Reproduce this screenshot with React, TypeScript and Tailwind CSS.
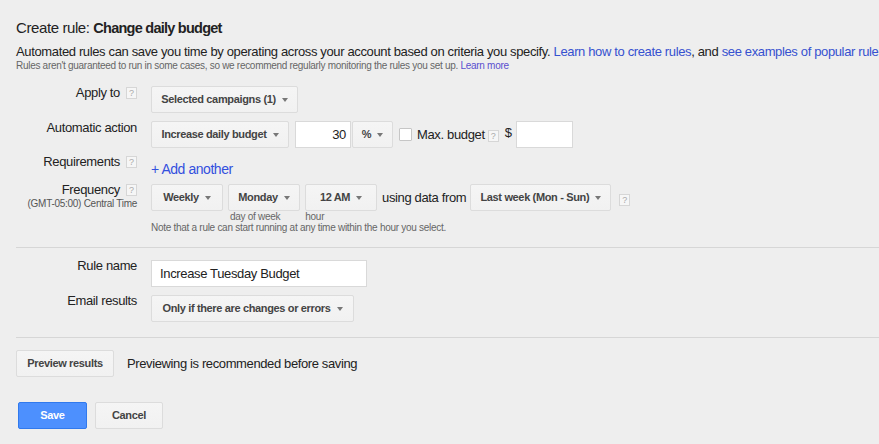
import React from "react";

function Arrow() {
  return (
    <span className="ml-[6px] inline-block h-0 w-0 border-x-[3.5px] border-t-[4px] border-x-transparent border-t-[#777]" />
  );
}

function Help() {
  return (
    <span className="ml-[6px] inline-flex h-[12px] w-[11px] items-center justify-center border border-[#d6d6d6] bg-[#f6f6f6] text-[9px] leading-none tracking-normal text-[#aaa]">
      ?
    </span>
  );
}

function DropButton({ label, width }: { label: string; width: string }) {
  return (
    <div
      className={`flex h-[27px] ${width} shrink-0 items-center justify-center rounded-[2px] border border-[#dcdcdc] bg-gradient-to-b from-[#f5f5f5] to-[#f1f1f1] text-[11px] font-bold tracking-[-0.35px] text-[#444]`}
    >
      <span>{label}</span>
      <Arrow />
    </div>
  );
}

function Label({ text, help, sub }: { text: string; help?: boolean; sub?: string }) {
  return (
    <div className="-mt-px w-[137px] shrink-0 text-right">
      <div className="flex items-center justify-end text-[13px] leading-[16px] tracking-[-0.35px] text-[#222]">
        <span>{text}</span>
        {help && <Help />}
      </div>
      {sub && <div className="text-[10px] leading-[12px] tracking-[-0.28px] text-[#555]">{sub}</div>}
    </div>
  );
}

export default function App() {
  return (
    <div className="h-[444px] w-[879px] overflow-hidden bg-[#eeeeee] font-['Liberation_Sans',Arial,sans-serif] text-[#222]">
      <div className="whitespace-nowrap pl-4 pt-[19px]">
        <div className="text-[15px] leading-[18px] tracking-[-0.4px]">
          Create rule: <span className="text-[14.5px] font-bold tracking-[-0.75px]">Change daily budget</span>
        </div>
        <div className="mt-[7px] text-[13px] leading-[16px] tracking-[-0.36px]">
          Automated rules can save you time by operating across your account based on criteria you specify.{" "}
          <span className="text-[#3651d0]">Learn how to create rules</span>, and{" "}
          <span className="text-[#3651d0]">see examples of popular rules</span>
        </div>
        <div className="text-[10px] leading-[12px] tracking-[-0.29px] text-[#666]">
          Rules aren't guaranteed to run in some cases, so we recommend regularly monitoring the rules you set up.{" "}
          <span className="text-[#5a4fcf]">Learn more</span>
        </div>
      </div>

      {/* Apply to */}
      <div className="mt-[14px] flex items-start">
        <Label text="Apply to" help />
        <div className="ml-[14px]">
          <DropButton label="Selected campaigns (1)" width="w-[147px]" />
        </div>
      </div>

      {/* Automatic action */}
      <div className="mt-[8px] flex items-start">
        <Label text="Automatic action" />
        <div className="ml-[14px] flex items-center text-[13px] tracking-[-0.35px]">
          <DropButton label="Increase daily budget" width="w-[138px]" />
          <div className="ml-[6px] flex h-[27px] w-[56px] items-center justify-end border border-[#d9d9d9] bg-white pr-[4px]">
            30
          </div>
          <div className="ml-[1px]">
            <DropButton label="%" width="w-[41px]" />
          </div>
          <span className="ml-[6px] h-[13px] w-[13px] rounded-[1px] border border-[#c6c6c6] bg-white" />
          <span className="ml-[5px]">Max. budget</span>
          <span className="-ml-[3px]">
            <Help />
          </span>
          <span className="ml-[6px] -mt-[3px]">$</span>
          <div className="ml-[4px] h-[27px] w-[57px] border border-[#d9d9d9] bg-white" />
        </div>
      </div>

      {/* Requirements */}
      <div className="mt-[7px] flex items-start">
        <Label text="Requirements" help />
        <div className="ml-[14px] mt-[6px] text-[14px] leading-[16px] tracking-[-0.45px] text-[#3350de]">+ Add another</div>
      </div>

      {/* Frequency */}
      <div className="mt-[6px] flex items-start">
        <Label text="Frequency" help sub="(GMT-05:00) Central Time" />
        <div className="ml-[14px] mt-[1px]">
          <div className="flex items-center">
            <DropButton label="Weekly" width="w-[72px]" />
            <div className="ml-[5px]">
              <DropButton label="Monday" width="w-[72px]" />
            </div>
            <div className="ml-[5px]">
              <DropButton label="12 AM" width="w-[72px]" />
            </div>
            <span className="ml-[5px] text-[13px] tracking-[-0.35px]">using data from</span>
            <div className="ml-[4px]">
              <DropButton label="Last week (Mon - Sun)" width="w-[141px]" />
            </div>
            <span className="ml-[2px]">
              <Help />
            </span>
          </div>
          <div className="flex text-[10px] leading-[11px] tracking-[-0.28px] text-[#666]">
            <span className="ml-[79px]">day of week</span>
            <span className="ml-[25px]">hour</span>
          </div>
          <div className="whitespace-nowrap text-[10px] leading-[11px] tracking-[-0.28px] text-[#666]">
            Note that a rule can start running at any time within the hour you select.
          </div>
        </div>
      </div>

      <div className="ml-4 mt-[14px] border-t border-[#d6d6d6]" />

      {/* Rule name */}
      <div className="mt-[11px] flex items-start">
        <Label text="Rule name" />
        <div className="ml-[14px] mt-[1px] flex h-[27px] w-[216px] items-center border border-[#d9d9d9] bg-white pl-[8px] text-[13px] tracking-[-0.35px]">
          Increase Tuesday Budget
        </div>
      </div>

      {/* Email results */}
      <div className="mt-[7px] flex items-start">
        <Label text="Email results" />
        <div className="ml-[14px] mt-[1px]">
          <DropButton label="Only if there are changes or errors" width="w-[203px]" />
        </div>
      </div>

      <div className="ml-4 mt-[15px] border-t border-[#d6d6d6]" />

      <div className="ml-4 mt-[12px] flex items-center">
        <div className="flex h-[27px] w-[98px] items-center justify-center rounded-[2px] border border-[#dcdcdc] bg-gradient-to-b from-[#f5f5f5] to-[#f1f1f1] text-[11px] font-bold tracking-[-0.35px] text-[#444]">
          Preview results
        </div>
        <span className="ml-[13px] text-[13px] tracking-[-0.38px]">Previewing is recommended before saving</span>
      </div>

      <div className="ml-[18px] mt-[25px] flex items-center">
        <div className="flex h-[27px] w-[69px] items-center justify-center rounded-[2px] border border-[#3079ed] bg-[#4d90fe] text-[11px] font-bold tracking-[-0.35px] text-white">
          Save
        </div>
        <div className="ml-[8px] flex h-[27px] w-[68px] items-center justify-center rounded-[2px] border border-[#dcdcdc] bg-gradient-to-b from-[#f5f5f5] to-[#f1f1f1] text-[11px] font-bold tracking-[-0.35px] text-[#444]">
          Cancel
        </div>
      </div>
    </div>
  );
}
